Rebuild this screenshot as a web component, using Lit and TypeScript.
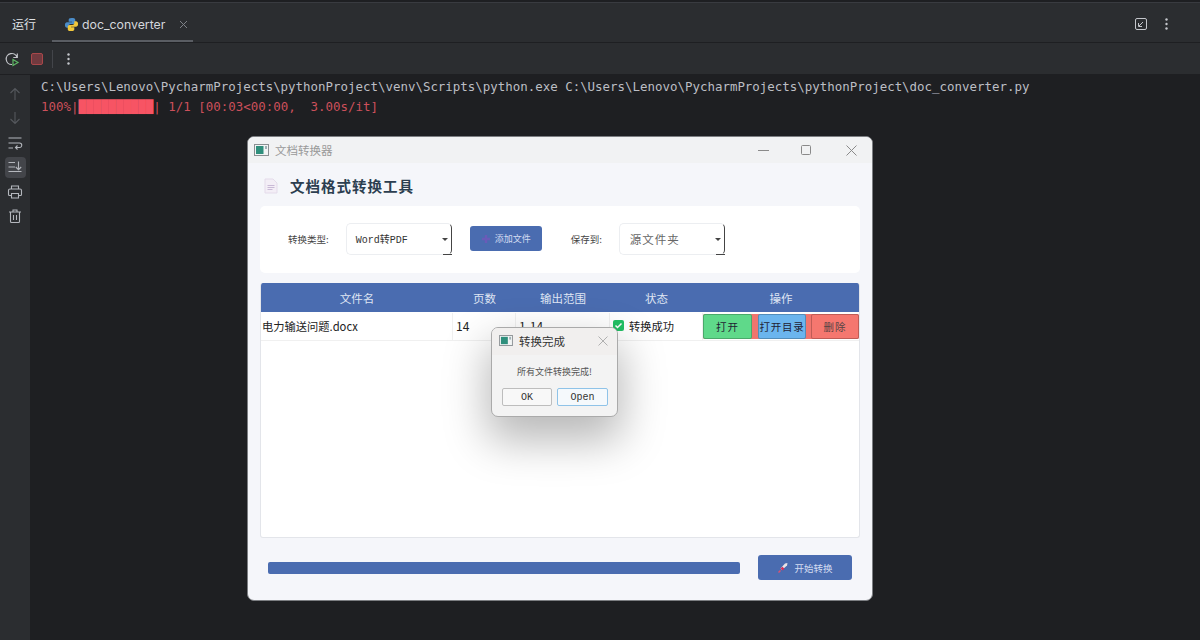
import { LitElement, html, css, svg } from "lit";
import { customElement } from "lit/decorators.js";

const appIcon = (w: number, h: number) => html`<svg width=${w} height=${h} viewBox="0 0 15 12"><rect x=".5" y=".5" width="14" height="11" fill="#f2f4f4" stroke="#8a8f92"/><rect x="2" y="2" width="7.5" height="8" fill="#2f8f7c"/><rect x="11" y="2" width="2" height="3" fill="#9fb0b5"/></svg>`;
const gutterIcon = (d: string) => html`<svg width="16" height="16" viewBox="0 0 16 16" fill="none" stroke="currentColor" stroke-width="1.1">${svg`<path d=${d}/>`}</svg>`;

@customElement("app-root")
export class AppRoot extends LitElement {
  static styles = css`
    :host { display: block; width: 1200px; height: 640px; position: relative; overflow: hidden; background: #1e1f22; font-family: "Inter", "Noto Sans CJK SC", sans-serif; }
    .ide { height: 640px; display: flex; flex-direction: column; }
    .tabs { height: 39px; margin-top: 2px; background: #2b2d30; border-bottom: 1px solid #1e1f22; border-top: 1px solid #393b40; display: flex; align-items: center; color: #dfe1e5; position: relative; box-sizing: content-box; }
    .run { font: 12px "Noto Sans CJK SC", sans-serif; margin-left: 12px; width: 40px; padding-top: 2px; }
    .tab { height: 39px; width: 141px; box-sizing: border-box; border-bottom: 2px solid #5a5d63; display: flex; align-items: center; padding: 5px 0 0 12px; gap: 3px; font-size: 12.3px; color: #d5d7dc; }
    .tab .x { margin-left: 11px; display: flex; color: #7f8288; }
    .right { margin-left: auto; display: flex; gap: 17px; align-items: center; padding: 2px 32px 0 0; color: #c4c6cb; }
    .bar { height: 31px; background: #2b2d30; border-bottom: 1px solid #1e1f22; display: flex; align-items: center; padding-left: 4px; }
    .stop { width: 10px; height: 10px; background: #703a3f; border: 1px solid #a8474a; border-radius: 2px; margin-left: 11px; }
    .sep { width: 1px; height: 18px; background: #43454a; margin-left: 9px; }
    .dots { display: flex; color: #c4c6cb; margin-left: 14px; }
    .main { flex: 1; display: flex; }
    .gutter { width: 30px; background: #2b2d30; display: flex; flex-direction: column; align-items: center; padding-top: 11px; gap: 8.4px; color: #b4b7bd; }
    .gbtn { width: 21px; height: 21px; display: flex; align-items: center; justify-content: center; border-radius: 4px; margin-top: -2.5px; margin-bottom: -2.5px; }
    .gbtn.on { background: #43454a; }
    .gbtn.dim { color: #55585d; }
    .console { flex: 1; padding: 2px 0 0 11px; font: 12.45px/20px "DejaVu Sans Mono", monospace; color: #bcbec4; white-space: pre; }
    .err { color: #cc505b; }
    .blk { color: #f75464; }
    .win { position: absolute; left: 247px; top: 136px; width: 626px; height: 465px; box-sizing: border-box; background: #f5f6fa; border-radius: 7px; border: 1px solid #7c7e82; display: flex; flex-direction: column; overflow: hidden; color: #333; }
    .wt { height: 26px; background: #f1f2f3; display: flex; align-items: center; padding-left: 6px; gap: 6px; font: 11.5px "Noto Sans CJK SC", sans-serif; color: #9a9a9a; }
    .ctl { margin-left: auto; display: flex; color: #8a8a8a; padding-right: 15px; align-items: center; }
    .ctl .mx { margin: 0 35px 0 32px; }
    .body { flex: 1; padding: 0 12px; display: flex; flex-direction: column; }
    .head { height: 43px; box-sizing: border-box; padding: 2px 0 0 4px; display: flex; align-items: center; gap: 12px; font: 700 14.5px "Noto Sans CJK SC", sans-serif; color: #2c3e50; letter-spacing: 1px; }
    .panel { height: 67px; box-sizing: border-box; padding: 0 0 2px 28px; background: #fff; border-radius: 5px; display: flex; align-items: center; font: 9.5px "Noto Sans CJK SC", sans-serif; color: #444; }
    .sel { height: 32px; box-sizing: border-box; border: 1px solid #eceef1; border-radius: 5px; border-right: 1px solid #444; display: flex; align-items: center; padding-left: 9px; position: relative; font-family: "Liberation Mono", "Noto Sans CJK SC", monospace; font-size: 10px; color: #333; background: #fff; }
    .sel.a { width: 106px; margin-left: 17px; }
    .sel.s { width: 106px; margin-left: 17px; font-size: 11.5px; letter-spacing: 1px; color: #666; padding-left: 10px; }
    .sel .arr { position: absolute; right: 3px; top: 14px; width: 0; height: 0; border: 3px solid transparent; border-top: 3px solid #444; }
    .sel .cor { position: absolute; right: -1px; bottom: -1px; width: 9px; height: 1px; background: #444; }
    .add { width: 72px; height: 25px; background: #4a6cb0; border-radius: 3px; margin-left: 18px; margin-right: 29px; color: #d4dcf0; display: flex; align-items: center; justify-content: center; gap: 4px; font-size: 9px; }
    .table { height: 255px; margin-top: 10px; box-sizing: border-box; background: #fff; border: 1px solid #e3e5ea; border-top: none; border-radius: 3px; overflow: hidden; font: 11.25px "Noto Sans CJK SC", sans-serif; color: #222; }
    .tr { display: grid; grid-template-columns: 192px 63px 94px 93px 1fr; }
    .th { height: 29px; margin-bottom: 1px; background: #4a6cb0; color: #dfe5f3; align-items: center; text-align: center; font-size: 11.5px; }
    .row { height: 27px; border-bottom: 1px solid #f0f0f0; align-items: center; }
    .row > div { height: 100%; display: flex; align-items: center; padding: 0 0 2px 1px; border-right: 1px solid #f0f0f0; box-sizing: border-box; }
    .pg { padding-left: 3px !important; font-size: 12px; }
    .ok { gap: 5px; padding-left: 3px !important; }
    .ops { border-right: none !important; padding: 0 !important; }
    .grp { width: 156px; height: 25px; background: #f0756e; border-radius: 2px; display: flex; gap: 6px; font: 10.5px "Liberation Mono", "Noto Sans CJK SC", monospace; }
    .op { box-sizing: border-box; border: 1px solid rgba(0,0,0,.22); border-radius: 2px; display: flex; align-items: center; justify-content: center; color: #223; height: 100%; }
    .g { width: 49px; background: #5fd98a; letter-spacing: 1px; }
    .bl { width: 48px; background: #6bb5ee; letter-spacing: .8px; margin-right: -1px; }
    .r { flex: 1; background: #f5776f; letter-spacing: 1px; color: #544; }
    .foot { flex: 1; display: flex; align-items: center; padding: 0 8px 3px 8px; }
    .prog { width: 472px; height: 12px; background: #4a6cb0; border-radius: 2px; }
    .go { width: 94px; height: 25px; background: #4a6cb0; border-radius: 3px; margin-left: 18px; color: #d4dcf0; display: flex; align-items: center; justify-content: center; gap: 5px; font: 9.5px "Noto Sans CJK SC", sans-serif; }
    .dlg { position: absolute; left: 491px; top: 327px; width: 127px; height: 90px; box-sizing: border-box; background: #f3f3f3; border: 1px solid #aaa; border-radius: 7px; box-shadow: 0 20px 44px 4px rgba(0,0,0,.28); display: flex; flex-direction: column; color: #333; overflow: hidden; }
    .dt { height: 27px; box-sizing: border-box; padding: 0 0 2px 7px; background: #f1efee; display: flex; align-items: center; gap: 6px; font: 11.5px "Noto Sans CJK SC", sans-serif; color: #333; }
    .dt .dx { margin-left: auto; margin-right: 9px; display: flex; color: #b0b0b0; }
    .msg { font: 9px "Noto Sans CJK SC", sans-serif; text-align: center; margin-top: 10px; color: #555; }
    .btns { display: flex; gap: 5px; padding-left: 10px; margin-top: 10px; }
    .dbtn { width: 50px; height: 18px; box-sizing: border-box; border: 1px solid #bdbdbd; border-radius: 2px; background: #f8f8f8; display: flex; align-items: center; justify-content: center; font: 10px "Liberation Mono", monospace; color: #333; }
    .dbtn.pri { width: 51px; border-color: #8fc3e8; background: #f5f9fc; }
  `;

  render() {
    return html`
      <div class="ide">
        <div class="tabs">
          <span class="run">运行</span>
          <div class="tab">
            <svg width="15" height="15" viewBox="0 0 16 16"><path d="M8 1C5.500 1 5 2 5 3v2h3.500v.6H3.200C2 5.600 1 6.600 1 8.500s1 3 2.200 3H5V9.600c0-1.200 1-2.100 2.200-2.100h2.900c1 0 1.900-.9 1.900-1.900V3c0-1.100-1-2-2.200-2z" fill="#4b8cc8"/><path d="M8 15c2.500 0 3-1 3-2v-2H7.500v-.6h5.300C14 10.400 15 9.400 15 7.500s-1-3-2.200-3H11v1.900c0 1.200-1 2.100-2.200 2.100H5.900C4.900 8.500 4 9.400 4 10.400V13c0 1.100 1 2 2.200 2z" fill="#f2c83c"/></svg>
            <span>doc_converter</span>
            <span class="x"><svg width="9" height="9" viewBox="0 0 9 9" stroke="currentColor" fill="none"><path d="M1 1l7 7M8 1l-7 7"/></svg></span>
          </div>
          <div class="right">
            <svg width="14" height="14" viewBox="0 0 14 14" fill="none" stroke="currentColor"><rect x="1.500" y="1.500" width="11" height="11" rx="1.500"/><path d="M4.500 6v3.500H8M5 9l4-4" /></svg>
            <svg width="3" height="12" viewBox="0 0 3 12" fill="currentColor"><circle cx="1.500" cy="1.500" r="1.200"/><circle cx="1.500" cy="6" r="1.200"/><circle cx="1.500" cy="10.500" r="1.200"/></svg>
          </div>
        </div>
        <div class="bar">
          <svg width="16" height="16" viewBox="0 0 16 16" fill="none"><path d="M8 13.500A5.500 5.500 0 1 1 13 6.500M13.300 2.500v4h-4" stroke="#c4c6cb" stroke-width="1.200"/><path d="M9 8.500l5 3-5 3z" stroke="#5fb865" stroke-width="1.200"/></svg>
          <div class="stop"></div>
          <div class="sep"></div>
          <span class="dots"><svg width="3" height="12" viewBox="0 0 3 12" fill="currentColor"><circle cx="1.500" cy="1.500" r="1.200"/><circle cx="1.500" cy="6" r="1.200"/><circle cx="1.500" cy="10.500" r="1.200"/></svg></span>
        </div>
        <div class="main">
          <div class="gutter">
            <span class="gbtn dim">${gutterIcon("M8 14V2.500M3.500 7L8 2.500 12.500 7")}</span>
            <span class="gbtn dim">${gutterIcon("M8 2v11.500M3.500 9L8 13.500 12.500 9")}</span>
            <span class="gbtn">${gutterIcon("M1.500 3h13M1.500 8h11a2 2 0 0 1 0 4.500H9M10.500 10.500L8.500 12.500l2 2M1.500 13h4.500")}</span>
            <span class="gbtn on">${gutterIcon("M1.500 3.500h6.500M1.500 8h6.500M1.500 12.500h13M11.500 2.500v8M8.800 8l2.700 2.700L14.200 8")}</span>
            <span class="gbtn">${gutterIcon("M4.500 5V2h7v3M4.500 11.500H2.500a1 1 0 0 1-1-1v-4a1.500 1.500 0 0 1 1.500-1.500h10a1.500 1.500 0 0 1 1.500 1.500v4a1 1 0 0 1-1 1h-2M4.500 9.500h7v4.500h-7z")}</span>
            <span class="gbtn">${gutterIcon("M2 4h12M6 4V2h4v2M3.500 4v9.500a1 1 0 0 0 1 1h7a1 1 0 0 0 1-1V4M6.500 7v5M9.500 7v5")}</span>
          </div>
          <div class="console">C:\\Users\\Lenovo\\PycharmProjects\\pythonProject\\venv\\Scripts\\python.exe C:\\Users\\Lenovo\\PycharmProjects\\pythonProject\\doc_converter.py
<span class="err">100%|<span class="blk">██████████</span>| 1/1 [00:03&lt;00:00,  3.00s/it]</span></div>
        </div>
      </div>

      <div class="win">
        <div class="wt">
          ${appIcon(15, 12)}<span>文档转换器</span>
          <div class="ctl">
            <svg width="11" height="11" viewBox="0 0 11 11" stroke="currentColor" fill="none"><path d="M0 5.500h11"/></svg>
            <svg class="mx" width="10" height="10" viewBox="0 0 10 10" stroke="currentColor" fill="none"><rect x=".5" y=".5" width="9" height="9" rx="1"/></svg>
            <svg width="11" height="11" viewBox="0 0 11 11" stroke="currentColor" fill="none"><path d="M.5.5l10 10M10.500.5l-10 10"/></svg>
          </div>
        </div>
        <div class="body">
          <div class="head">
            <svg width="14" height="16" viewBox="0 0 14 16"><path d="M1 1h8l4 4v10H1z" fill="#f3eef6" stroke="#e4dbea"/><path d="M3.500 7.500h7M3.500 9.500h7M3.500 11.500h5" stroke="#c9b9d6"/></svg>
            <span>文档格式转换工具</span>
          </div>
          <div class="panel">
            <span>转换类型:</span>
            <div class="sel a">Word转PDF<i class="arr"></i><i class="cor"></i></div>
            <div class="add">
              <svg width="10" height="10" viewBox="0 0 10 10"><path d="M5 1v8M1 5h8" stroke="#6a5bb8" stroke-width="2.400"/></svg>
              <span>添加文件</span>
            </div>
            <span>保存到:</span>
            <div class="sel s">源文件夹<i class="arr"></i><i class="cor"></i></div>
          </div>
          <div class="table">
            <div class="tr th"><span>文件名</span><span>页数</span><span>输出范围</span><span>状态</span><span>操作</span></div>
            <div class="tr row">
              <div>电力输送问题.docx</div>
              <div class="pg">14</div>
              <div class="pg">1-14</div>
              <div class="ok">
                <svg width="11" height="11" viewBox="0 0 11 11"><rect width="11" height="11" rx="2" fill="#22c064"/><path d="M2.500 5.500l2 2 4-4" stroke="#fff" stroke-width="1.500" fill="none"/></svg>
                <span>转换成功</span>
              </div>
              <div class="ops"><div class="grp"><span class="op g">打开</span><span class="op bl">打开目录</span><span class="op r">删除</span></div></div>
            </div>
          </div>
          <div class="foot">
            <div class="prog"></div>
            <div class="go">
              <svg width="12" height="12" viewBox="0 0 12 12"><path d="M3.500 6.500L8 1.500l2.500-.5-.5 2.500-5 4.500z" fill="#e9e3e6"/><path d="M3.500 6.500l2 2 2-1.800-2-2z" fill="#d8315b"/><path d="M3.500 8.500L1.500 10.500" stroke="#e05070" stroke-width="1.400"/></svg>
              <span>开始转换</span>
            </div>
          </div>
        </div>
      </div>

      <div class="dlg">
        <div class="dt">
          ${appIcon(14, 11)}<span>转换完成</span>
          <span class="dx"><svg width="10" height="10" viewBox="0 0 10 10" stroke="currentColor" fill="none"><path d="M.5.500l9 9M9.500.500l-9 9"/></svg></span>
        </div>
        <div class="msg">所有文件转换完成!</div>
        <div class="btns"><div class="dbtn">OK</div><div class="dbtn pri">Open</div></div>
      </div>
    `;
  }
}
